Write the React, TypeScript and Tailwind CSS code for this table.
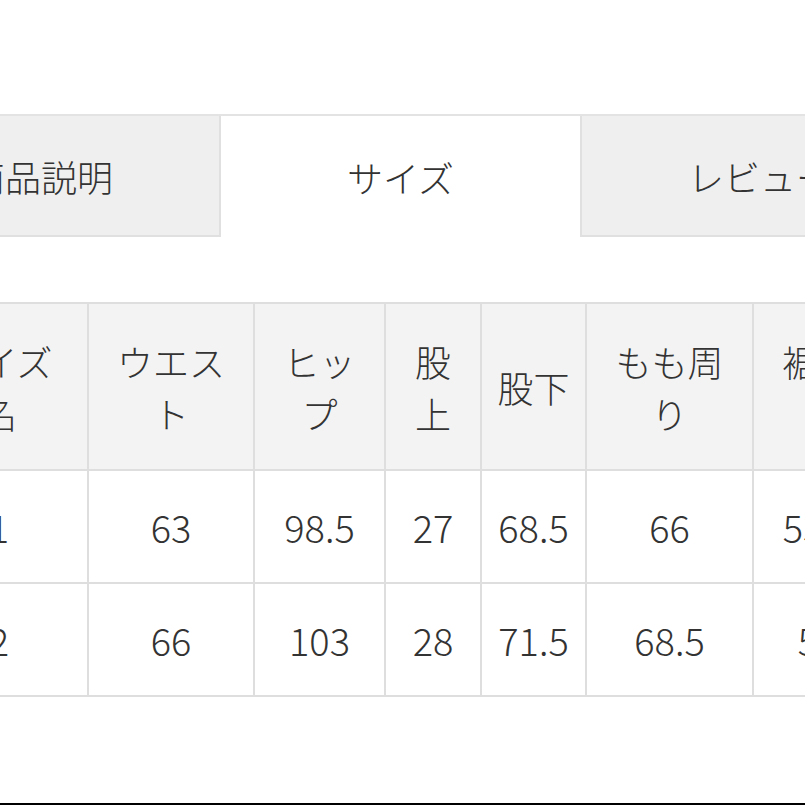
import React from 'react';

const headers: string[][] = [
  ['サイズ', '名'],
  ['ウエス', 'ト'],
  ['ヒッ', 'プ'],
  ['股', '上'],
  ['股下'],
  ['もも周', 'り'],
  ['裾周', 'り'],
];

const colWidths = ['w-[178px]', 'w-[166px]', 'w-[131px]', 'w-[96px]', 'w-[105px]', 'w-[167px]', 'w-[130px]'];

const rows: string[][] = [
  ['1', '63', '98.5', '27', '68.5', '66', '53.5'],
  ['2', '66', '103', '28', '71.5', '68.5', '55'],
];

function Tab({ label, active }: { label: string; active?: boolean }) {
  return (
    <div
      className={
        active
          ? 'w-[359px] shrink-0 h-[121px] flex items-center justify-center bg-white'
          : 'w-[360px] shrink-0 h-[121px] flex items-center justify-center bg-[#efefef] border-x-2 border-b-2 border-[#e0e0e0]'
      }
    >
      <span className="text-[36px] font-light text-[#333]">{label}</span>
    </div>
  );
}

export default function App() {
  return (
    <div
      className="w-[805px] h-[805px] overflow-hidden bg-white flex flex-col"
      style={{ fontFamily: '"Noto Sans CJK JP", "Noto Sans", sans-serif' }}
    >
      {/* tabs */}
      <div className="mt-[114px] border-t-2 border-[#e3e3e3] flex ml-[-139px]">
        <Tab label="商品説明" />
        <Tab label="サイズ" active />
        <Tab label="レビュー" />
      </div>

      {/* size table */}
      <div className="mt-[65px] ml-[-91px] w-[973px] shrink-0">
        <table className="w-[973px] border-collapse table-fixed text-[#333]">
          <colgroup>
            {colWidths.map((w, i) => (
              <col key={i} className={w} />
            ))}
          </colgroup>
          <thead>
            <tr className="bg-[#f3f3f3]">
              {headers.map((lines, i) => (
                <th
                  key={i}
                  className="h-[167px] border-2 border-[#dedede] font-light text-[36px] leading-[52px] text-center align-middle p-0"
                >
                  {lines.map((l, j) => (
                    <div key={j}>{l}</div>
                  ))}
                </th>
              ))}
            </tr>
          </thead>
          <tbody>
            {rows.map((r, ri) => (
              <tr key={ri}>
                {r.map((v, ci) => (
                  <td
                    key={ci}
                    className="h-[113px] border-2 border-[#dedede] font-light text-[38px] text-center align-middle p-0"
                  >
                    {v}
                  </td>
                ))}
              </tr>
            ))}
          </tbody>
        </table>
      </div>

      <div className="mt-auto h-[2px] bg-black" />
    </div>
  );
}
